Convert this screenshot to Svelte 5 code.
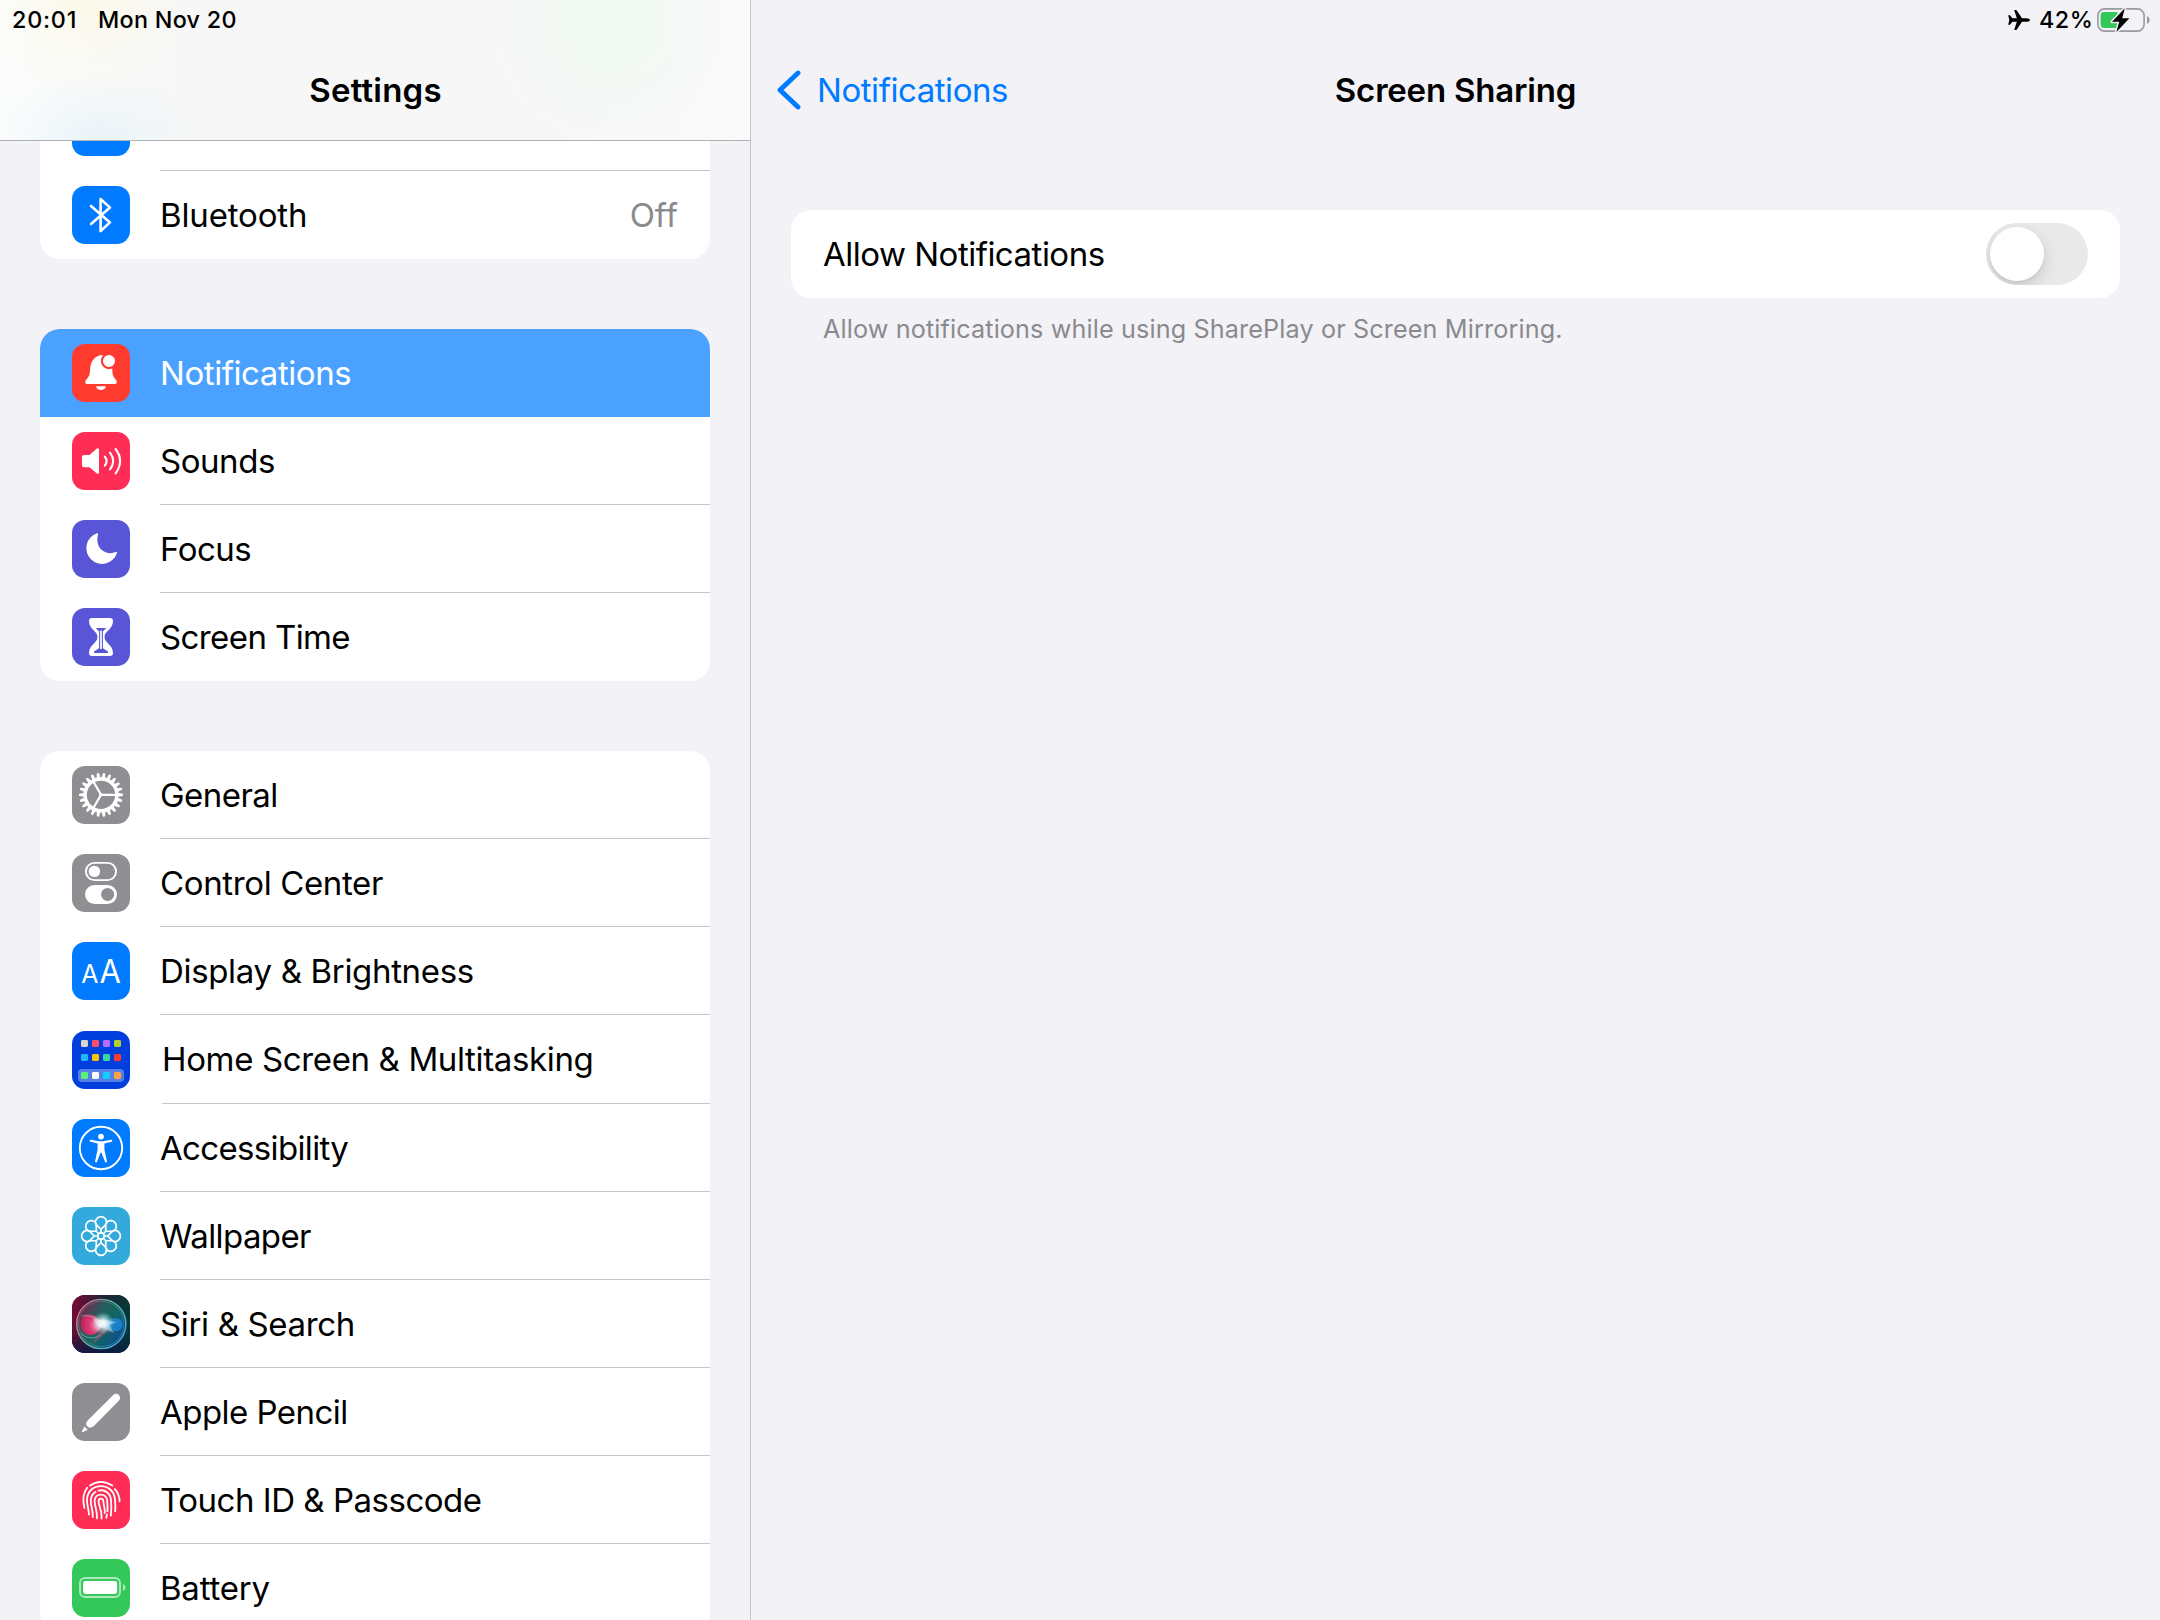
<script>
  const groups = [
    {
      cls: 'first',
      rows: [
        { icon: 'wifi', bg: 'blue', label: '', ls: 0 },
        { icon: 'bluetooth', bg: 'blue', label: 'Bluetooth', ls: -0.15, value: 'Off' }
      ]
    },
    {
      cls: 'second',
      rows: [
        { icon: 'bell', bg: 'red', label: 'Notifications', ls: -0.43, selected: true },
        { icon: 'sounds', bg: 'pink', label: 'Sounds', ls: -0.45 },
        { icon: 'focus', bg: 'indigo', label: 'Focus', ls: -0.5 },
        { icon: 'hourglass', bg: 'indigo', label: 'Screen Time', ls: -0.6 }
      ]
    },
    {
      cls: 'third',
      rows: [
        { icon: 'gear', bg: 'gray', label: 'General', ls: -0.55 },
        { icon: 'control', bg: 'gray', label: 'Control Center', ls: -0.36 },
        { icon: 'display', bg: 'blue', label: 'Display & Brightness', ls: -0.33 },
        { icon: 'home', bg: 'navy', label: 'Home Screen & Multitasking', ls: -0.36, tall: true },
        { icon: 'access', bg: 'blue', label: 'Accessibility', ls: -0.66 },
        { icon: 'wallpaper', bg: 'cyan', label: 'Wallpaper', ls: -0.6 },
        { icon: 'siri', bg: 'black', label: 'Siri & Search', ls: -0.35 },
        { icon: 'pencil', bg: 'gray', label: 'Apple Pencil', ls: -0.54 },
        { icon: 'touch', bg: 'pink', label: 'Touch ID & Passcode', ls: -0.48 },
        { icon: 'battery', bg: 'green', label: 'Battery', ls: -0.22 }
      ]
    }
  ];

  const TEETH = 22;
  const teeth = Array.from({ length: TEETH }, (_, i) => (i * 360) / TEETH);
  const petals = Array.from({ length: 8 }, (_, i) => i * 45);
  const apps = [
    [9, 9, '#d8d3cb'], [20, 9, '#ff4f66'], [31, 9, '#b86bff'], [42, 9, '#b2cf35'],
    [9, 23, '#1fb8f8'], [20, 23, '#ffc200'], [31, 23, '#3ad6a3'], [42, 23, '#ff3b30'],
    [9, 41, '#5af078'], [20, 41, '#ffffff'], [31, 41, '#15cdff'], [42, 41, '#ff9f45']
  ];
</script>

<div class="screen">
  <aside>
    <header class="bar side">
      <div class="status">
        <span class="time">20:01</span>
        <span class="date">Mon Nov 20</span>
      </div>
      <div class="nav"><h1 class="settings">Settings</h1></div>
    </header>

    <div class="list">
      {#each groups as g}
        <section class="group {g.cls}">
          {#each g.rows as r}
            <div class="row" class:selected={r.selected} class:tall={r.tall}>
              <svg class="icon {r.bg}" viewBox="0 0 58 58">
                {#if r.icon === 'wifi'}
                  <g fill="none" stroke="#fff" stroke-width="4">
                    <path d="M12 24a24 24 0 0 1 34 0M18 30a16 16 0 0 1 22 0" />
                  </g>
                  <path d="M23 36a9 9 0 0 1 12 0l-6 6.6z" fill="#fff" />
                {:else if r.icon === 'bluetooth'}
                  <path d="M19 20L38 36.4L28.6 45V13L38 21.6L19 38" fill="none" stroke="#fff" stroke-width="2.6" stroke-linecap="round" stroke-linejoin="round" />
                {:else if r.icon === 'bell'}
                  <path d="M29 11C22.5 12.5 18.6 17.5 18.2 24C17.9 31 17.2 32.2 14.4 35.6C12.4 38.2 13 40 15 40H43C45 40 45.7 38.2 43.7 35.6C41 32.2 40.4 31 40.2 24C39 17 35 11.5 29 11Z" fill="#fff" />
                  <path d="M24 42.2H34C33.4 44.7 31.5 46 29 46S24.6 44.7 24 42.2Z" fill="#fff" />
                  <circle cx="37" cy="17" r="7.1" fill="#fff" stroke="#ff3b30" stroke-width="2.2" />
                {:else if r.icon === 'sounds'}
                  <path d="M12 23H17.5L24.6 16.8C25.8 15.9 27 16.3 27 17.8V40.4C27 41.9 25.7 42.2 24.6 41.3L17.5 35.2H12C10.8 35.2 10 34.5 10 33.3V25C10 23.7 10.8 23 12 23Z" fill="#fff" />
                  <path d="M32.8 24.6Q36.4 29 32.8 33.6M38 20.6Q44.4 29 38 37.4M43.6 17Q52.6 29 43.6 41.4" fill="none" stroke="#fff" stroke-width="2.1" stroke-linecap="round" />
                {:else if r.icon === 'focus'}
                  <path d="M25 13.3A15.7 15.7 0 1 0 44.9 33.2C45.3 32.2 44.8 31.7 43.8 32.1C38.5 34.2 33 33 29.2 29.4C25.4 25.6 24.5 20 26 14.2C26.2 13.3 25.9 13 25 13.3Z" fill="#fff" />
                {:else if r.icon === 'hourglass'}
                  <path d="M20 10H38C40 10 41 11 41 13C41 21 33 23 32.6 28V30C33 35 41 37 41 45C41 47 40 48 38 48H20C18 48 17 47 17 45C17 37 25 35 25.4 30V28C25 23 17 21 17 13C17 11 18 10 20 10Z" fill="#fff" />
                  <path d="M23.8 20H34.2L30.9 23.6V40.2L36 43.4V45H22V43.4L27.1 40.2V23.6Z" fill="#5856d6" />
                  <path d="M29 22.5V41" stroke="#fff" stroke-width="1.7" />
                {:else if r.icon === 'gear'}
                  <g transform="translate(29 28.8)">
                    <circle r="15.9" fill="none" stroke="#fff" stroke-width="3.5" />
                    {#each teeth as a}
                      <path d="M16.5 -2L21.7 -1.1Q22.5 0 21.7 1.1L16.5 2Z" fill="#fff" transform="rotate({a})" />
                    {/each}
                    <path d="M0 0H15M0 0L-7.6 -13.2M0 0L-7.6 13.2" stroke="#fff" stroke-width="2.2" />
                    <circle r="1.8" fill="#fff" />
                  </g>
                {:else if r.icon === 'control'}
                  <rect x="13.9" y="8.9" width="30.2" height="17.2" rx="8.6" fill="none" stroke="#fff" stroke-width="1.9" />
                  <circle cx="22.4" cy="17.4" r="5.7" fill="#fff" />
                  <rect x="13" y="31" width="32" height="19" rx="9.5" fill="#fff" />
                  <circle cx="35.6" cy="40.4" r="6.5" fill="#8e8e93" />
                {:else if r.icon === 'display'}
                  <g fill="#fff" font-family="Inter, sans-serif">
                    <text x="9.2" y="41" font-size="25.5" textLength="17.2" lengthAdjust="spacingAndGlyphs">A</text>
                    <text x="27.6" y="41" font-size="32.5" textLength="21.4" lengthAdjust="spacingAndGlyphs">A</text>
                  </g>
                {:else if r.icon === 'home'}
                  <rect x="6" y="38" width="46" height="13" rx="4" fill="#5580e8" />
                  {#each apps as [x, y, c]}
                    <rect {x} {y} width="7" height="7" rx="1.4" fill={c} />
                  {/each}
                {:else if r.icon === 'access'}
                  <circle cx="29" cy="29" r="21.2" fill="none" stroke="#fff" stroke-width="1.9" />
                  <circle cx="29" cy="17.6" r="2.9" fill="#fff" />
                  <path d="M18.9 20.8L27 22.2H31L39.1 20.8A1 1 0 0 1 39.5 22.8L32.4 24.6V30.5L34.9 42.2A1 1 0 0 1 33 42.8L29.5 33.8H28.5L25 42.8A1 1 0 0 1 23.1 42.2L25.6 30.5V24.6L18.5 22.8A1 1 0 0 1 18.9 20.8Z" fill="#fff" />
                {:else if r.icon === 'wallpaper'}
                  <g transform="translate(29 29)" fill="none" stroke="#fff" stroke-width="1.7">
                    <circle r="3.2" />
                    {#each petals as a}
                      <path d="M0 -3.2V-6.7M-5.3 -12L0 -6.7L5.3 -12M-5.3 -12A5.6 5.6 0 1 1 5.3 -12" transform="rotate({a})" />
                    {/each}
                  </g>
                {:else if r.icon === 'siri'}
                  <defs>
                    <linearGradient id="sBack" x1="0" y1="0.2" x2="1" y2="0.4">
                      <stop offset="0" stop-color="#780a32" />
                      <stop offset="0.5" stop-color="#1c2438" />
                      <stop offset="1" stop-color="#053b38" />
                    </linearGradient>
                    <linearGradient id="sShade" x1="0" y1="0" x2="0" y2="1">
                      <stop offset="0.6" stop-color="#0a1240" stop-opacity="0" />
                      <stop offset="1" stop-color="#0a1446" stop-opacity="0.7" />
                    </linearGradient>
                    <linearGradient id="sOrb" x1="0" y1="0.25" x2="0.85" y2="0.85">
                      <stop offset="0" stop-color="#7a2348" />
                      <stop offset="0.35" stop-color="#2a5a5c" />
                      <stop offset="0.6" stop-color="#14665f" />
                      <stop offset="1" stop-color="#0b4f8e" />
                    </linearGradient>
                    <linearGradient id="sRim" x1="0" y1="0.2" x2="1" y2="0.8">
                      <stop offset="0" stop-color="#d9718c" />
                      <stop offset="0.5" stop-color="#5fb5a5" />
                      <stop offset="1" stop-color="#4aa3e0" />
                    </linearGradient>
                    <radialGradient id="sPink" cx="0.85" cy="0.5" r="0.8">
                      <stop offset="0" stop-color="#ffb3cf" />
                      <stop offset="0.6" stop-color="#dd3a72" />
                      <stop offset="1" stop-color="#d81f5e" stop-opacity="0.85" />
                    </radialGradient>
                    <radialGradient id="sGlow">
                      <stop offset="0" stop-color="#fff" />
                      <stop offset="0.3" stop-color="#e8fbff" stop-opacity="0.85" />
                      <stop offset="1" stop-color="#9fe6ee" stop-opacity="0" />
                    </radialGradient>
                  </defs>
                  <rect width="58" height="58" fill="url(#sBack)" />
                  <rect width="58" height="58" fill="url(#sShade)" />
                  <circle cx="29.3" cy="29" r="24.6" fill="url(#sOrb)" stroke="url(#sRim)" stroke-width="1.4" />
                  <circle cx="29.3" cy="29" r="22.6" fill="none" stroke="url(#sRim)" stroke-opacity="0.4" stroke-width="1" />
                  <path d="M30 28C24 18 12 16 9 25C7 36 15 43 23 39C27 36 29 33 31 29Z" fill="url(#sPink)" />
                  <path d="M30 29C36 25 42 21 49 25C53 31 48 38 41 36C36 34 34 31 30 29Z" fill="#1c86d6" fill-opacity="0.85" />
                  <path d="M10 21C20 19 30 26 34 33C28 44 16 46 9 38" fill="none" stroke="#8fd6d4" stroke-opacity="0.6" />
                  <path d="M31 29L44 45L36 36L21 49L27 35Z" fill="#ea4c78" fill-opacity="0.4" />
                  <circle cx="31" cy="28" r="11" fill="url(#sGlow)" />
                  <path d="M21 24L32 25L45 27L37 30L42 38L30 33L26 31Z" fill="#fff" fill-opacity="0.4" />
                {:else if r.icon === 'pencil'}
                  <path d="M41 12.2C43.4 10 45.6 10.6 47 12.2C48.4 13.8 48.6 16 46.6 18L22.4 42.4C21.4 43.4 18.6 45 16.9 44.6C15.4 44 14.3 42.4 14 41C13.8 39.6 15.6 37.6 16.4 36.8Z" fill="#fff" />
                  <path d="M12.3 43.3C13 44.6 14.4 45.9 15.9 46.4L11.2 48.9C10.2 49.3 9.8 48.8 10.1 47.9Z" fill="#fff" />
                {:else if r.icon === 'touch'}
                  <g fill="none" stroke="#fff" stroke-width="1.8" stroke-linecap="round">
                    <path d="M18 14.6Q28.8 7.2 40.4 14.6" />
                    <path d="M15.2 16.8C11.4 21.5 10.2 28 12.4 37" />
                    <path d="M42.8 18.2C46 21.5 47.4 25.5 47.6 30.4" />
                    <path d="M16.9 43.6C16.9 38 14.8 35 15 28.6C15.6 10.6 42 10.6 43 28.6C43.4 33 43.6 36.4 43.2 40.4" />
                    <path d="M20.8 46C21.2 39.4 18.8 36 18.8 29.6C19 25.8 20.6 22.6 23.6 20.9M26.4 19.6C33 18 38.6 22.4 39 29C39.5 34.5 39.5 39.6 38.8 44.6" />
                    <path d="M25 47.4C25.4 39.4 22.8 36 22.6 30C22.8 21.4 34.8 21.4 35.2 30C35.6 34 35.7 37 35.4 40.4M35 43.4L34.3 46.8" />
                    <path d="M29.6 47.6C30.2 39.4 26.9 36 26.6 30.4C26.6 26.6 31.2 26.6 31.4 30.4C31.8 36 33.4 37.6 32.7 42" />
                  </g>
                {:else if r.icon === 'battery'}
                  <rect x="8" y="19" width="40" height="19" rx="5" fill="none" stroke="#fff" stroke-opacity="0.6" stroke-width="1.9" />
                  <rect x="11" y="22" width="34.2" height="13" rx="2.4" fill="#fff" />
                  <path d="M51 25C54.4 26.4 54.4 30.6 51 32Z" fill="#fff" fill-opacity="0.6" />
                {/if}
              </svg>
              <div class="cell">
                <span class="label" style="letter-spacing: {r.ls}px">{r.label}</span>
                {#if r.value}<span class="value">{r.value}</span>{/if}
              </div>
            </div>
          {/each}
        </section>
      {/each}
    </div>
  </aside>

  <main>
    <header class="bar">
      <div class="status right">
        <svg class="plane" viewBox="0 0 22 20">
          <path d="M22 10C22 9 20.2 8.2 18.4 8.2H14L8.8 0.6C8.5 0.2 8.2 0 7.7 0H6.2L8.8 8.2H4.4L2 5.2H0.2L1.3 10L0.2 14.8H2L4.4 11.8H8.8L6.2 20H7.7C8.2 20 8.5 19.8 8.8 19.4L14 11.8H18.4C20.2 11.8 22 11 22 10Z" />
        </svg>
        <span class="percent">42%</span>
        <svg class="charge" viewBox="0 0 54 26">
          <rect x="0.9" y="1.9" width="46.2" height="22.2" rx="6.6" fill="none" stroke="#9b9b9f" stroke-width="1.6" />
          <path d="M7 5H20.5V21H7Q3.6 21 3.6 17.6V8.4Q3.6 5 7 5Z" fill="#34c759" />
          <path d="M50 9.2C53.6 10.4 53.6 15.6 50 16.8Z" fill="#9b9b9f" />
          <path d="M27.8 1.2L15 14.8H22.2L19.4 25L32.4 11.2H25.2Z" fill="#000" stroke="#f2f2f7" stroke-width="3" stroke-linejoin="round" paint-order="stroke" />
        </svg>
      </div>
      <div class="nav">
        <div class="back">
          <svg viewBox="0 0 24 40"><path d="M21 3L3 20L21 37" fill="none" stroke="#007aff" stroke-width="4.9" stroke-linecap="round" stroke-linejoin="round" /></svg>
          <span>Notifications</span>
        </div>
        <h1>Screen Sharing</h1>
      </div>
    </header>

    <section class="panel">
      <span class="allow">Allow Notifications</span>
      <span class="toggle"><i></i></span>
    </section>
    <p class="note">Allow notifications while using SharePlay or Screen Mirroring.</p>
  </main>
</div>

<style>
  :global(body) {
    background: #f2f2f7;
    overflow: hidden;
  }
  .screen {
    display: grid;
    grid-template-columns: 751px 1fr;
    height: 1620px;
    width: 2160px;
    overflow: hidden;
    background: #f2f2f7;
    color: #000;
    font: 400 33px/40px Inter, "Noto Sans", sans-serif;
  }
  aside {
    display: flex;
    flex-direction: column;
    min-height: 0;
    height: 1620px;
    box-sizing: border-box;
    border-right: 1px solid #c6c6c8;
  }
  .bar {
    display: flex;
    flex-direction: column;
    height: 141px;
    flex: none;
    box-sizing: border-box;
  }
  .side {
    border-bottom: 1px solid #b2b2b5;
    background:
      radial-gradient(ellipse 110px 100px at 85px 0, rgba(255, 248, 222, 0.6), rgba(255, 248, 222, 0.25) 50%, rgba(255, 248, 222, 0)),
      radial-gradient(ellipse 130px 130px at 612px 20px, rgba(236, 250, 240, 0.85), rgba(236, 250, 240, 0.35) 50%, rgba(236, 250, 240, 0)),
      radial-gradient(ellipse 110px 70px at 100px 141px, rgba(230, 242, 249, 0.8), rgba(230, 242, 249, 0.35) 50%, rgba(230, 242, 249, 0)),
      linear-gradient(90deg, #fbfdfc 0, #f7f7f7 180px, #f7f7f7 560px, #fafafa 750px);
  }
  .status {
    display: flex;
    align-items: center;
    height: 39px;
    padding-left: 12px;
    font-size: 23.3px;
    font-weight: 500;
    line-height: 39px;
    white-space: nowrap;
  }
  .time {
    width: 86px;
    letter-spacing: 0.8px;
  }
  .date {
    letter-spacing: 0.3px;
  }
  .status.right {
    justify-content: flex-end;
    padding: 0 9px 0 0;
  }
  .plane {
    width: 22px;
    height: 20px;
    margin-right: 9px;
    margin-top: 1px;
  }
  .percent {
    width: 58px;
    letter-spacing: 0.5px;
  }
  .charge {
    width: 54px;
    height: 26px;
    margin-top: 1px;
  }
  .nav {
    display: grid;
    grid-template-columns: 1fr auto 1fr;
    align-items: center;
    height: 102px;
  }
  h1 {
    grid-column: 2;
    grid-row: 1;
    margin: 0;
    font-size: 33px;
    font-weight: 600;
    line-height: 40px;
    letter-spacing: -0.2px;
  }
  .settings {
    padding-left: 1px;
    letter-spacing: 0.2px;
  }
  .back {
    grid-column: 1;
    grid-row: 1;
    display: flex;
    align-items: center;
    padding-left: 26px;
    color: #007aff;
    letter-spacing: -0.45px;
  }
  .back svg {
    width: 24px;
    height: 40px;
    margin-right: 16px;
  }
  .list {
    flex: 1;
    min-height: 0;
    overflow: hidden;
    padding: 0 40px;
  }
  .group {
    overflow: hidden;
    border-radius: 20px;
    background: #fff;
    margin-bottom: 70px;
  }
  .first {
    margin-top: -58px;
  }
  .row {
    display: flex;
    align-items: center;
    height: 88px;
    padding-left: 32px;
  }
  .tall {
    height: 89px;
  }
  .icon {
    flex: none;
    width: 58px;
    height: 58px;
    border-radius: 13px;
    margin-right: 30px;
  }
  .tall .icon {
    margin-top: 1px;
    margin-right: 32px;
  }
  .cell {
    flex: 1;
    display: flex;
    align-items: center;
    justify-content: space-between;
    height: 100%;
    box-sizing: border-box;
    padding-right: 32px;
    box-shadow: inset 0 -1px #c6c6c8;
    white-space: nowrap;
  }
  .tall .cell {
    padding-bottom: 1px;
  }
  .row:last-child .cell,
  .selected .cell {
    box-shadow: none;
  }
  .selected {
    background: #4ba1ff;
    color: #fff;
  }
  .value {
    color: #8a8a8e;
  }
  .blue { background: #007aff; }
  .red { background: #ff3b30; }
  .pink { background: #ff2d55; }
  .indigo { background: #5856d6; }
  .gray { background: #8e8e93; }
  .navy { background: #003fdd; }
  .cyan { background: #34aadc; }
  .green { background: #34c759; }
  .black { background: #101a30; }

  .panel {
    display: flex;
    align-items: center;
    justify-content: space-between;
    height: 88px;
    margin: 69px 40px 0;
    padding: 0 32px;
    box-sizing: border-box;
    border-radius: 20px;
    background: #fff;
  }
  .allow {
    letter-spacing: -0.5px;
  }
  .toggle {
    display: flex;
    width: 102px;
    height: 62px;
    padding: 4px;
    box-sizing: border-box;
    overflow: hidden;
    border-radius: 31px;
    background: #e9e9ea;
  }
  .toggle i {
    width: 54px;
    height: 54px;
    border-radius: 50%;
    background: #fff;
    box-shadow: 0 6px 16px rgba(0, 0, 0, 0.14), 0 2px 2px rgba(0, 0, 0, 0.05);
  }
  .note {
    margin: 16px 72px 0;
    font-size: 25.2px;
    line-height: 30px;
    letter-spacing: 0.13px;
    color: #8a8a8e;
  }
</style>
